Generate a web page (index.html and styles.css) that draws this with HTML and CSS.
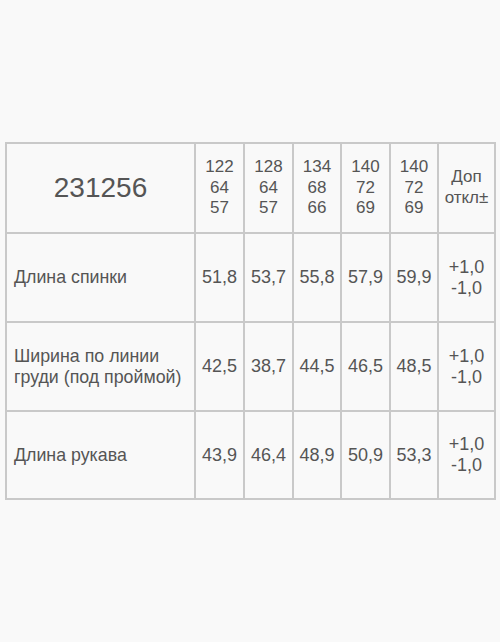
FILE: index.html
```html
<!DOCTYPE html>
<html lang="ru">
<head>
<meta charset="utf-8">
<title>231256</title>
<link rel="stylesheet" href="styles.css">
</head>
<body>
<div class="page">
  <table class="sizes">
    <colgroup>
      <col class="c-name">
      <col class="c-size">
      <col class="c-size">
      <col class="c-size2">
      <col class="c-size">
      <col class="c-size2">
      <col class="c-tol">
    </colgroup>
    <tr class="head">
      <td class="article">231256</td>
      <td class="num">122<br>64<br>57</td>
      <td class="num">128<br>64<br>57</td>
      <td class="num">134<br>68<br>66</td>
      <td class="num">140<br>72<br>69</td>
      <td class="num">140<br>72<br>69</td>
      <td class="num">Доп<br>откл±</td>
    </tr>
    <tr class="row">
      <td class="label">Длина спинки</td>
      <td class="val">51,8</td>
      <td class="val">53,7</td>
      <td class="val">55,8</td>
      <td class="val">57,9</td>
      <td class="val">59,9</td>
      <td class="tol">+1,0<br>-1,0</td>
    </tr>
    <tr class="row">
      <td class="label">Ширина по линии<br>груди (под проймой)</td>
      <td class="val">42,5</td>
      <td class="val">38,7</td>
      <td class="val">44,5</td>
      <td class="val">46,5</td>
      <td class="val">48,5</td>
      <td class="tol">+1,0<br>-1,0</td>
    </tr>
    <tr class="row last">
      <td class="label">Длина рукава</td>
      <td class="val">43,9</td>
      <td class="val">46,4</td>
      <td class="val">48,9</td>
      <td class="val">50,9</td>
      <td class="val">53,3</td>
      <td class="tol">+1,0<br>-1,0</td>
    </tr>
  </table>
</div>
</body>
</html>
```

FILE: styles.css
```css
html, body {
  margin: 0;
  padding: 0;
  background: #f9f9f9;
}
body {
  width: 500px;
  height: 642px;
  font-family: "Liberation Sans", Arial, sans-serif;
  color: #555555;
}
.page {
  padding: 142px 0 0 5px;
}
.sizes {
  border-collapse: collapse;
  table-layout: fixed;
  width: 489px;
}
.c-name { width: 189px; }
.c-size { width: 49px; }
.c-size2 { width: 48px; }
.c-tol { width: 57px; }
.sizes td {
  border: 2px solid #c9c9c9;
  padding: 0;
  vertical-align: middle;
  text-align: center;
}
.head { height: 90px; }
.row { height: 89px; }
.row.last { height: 88px; }
.article {
  font-size: 28px;
}
.num {
  font-size: 17px;
  line-height: 20.7px;
}
.label {
  text-align: left !important;
  padding-left: 7px !important;
  font-size: 17.8px;
  line-height: 20.7px;
}
.val {
  font-size: 18px;
}
.tol {
  font-size: 18px;
  line-height: 20.7px;
}
```
